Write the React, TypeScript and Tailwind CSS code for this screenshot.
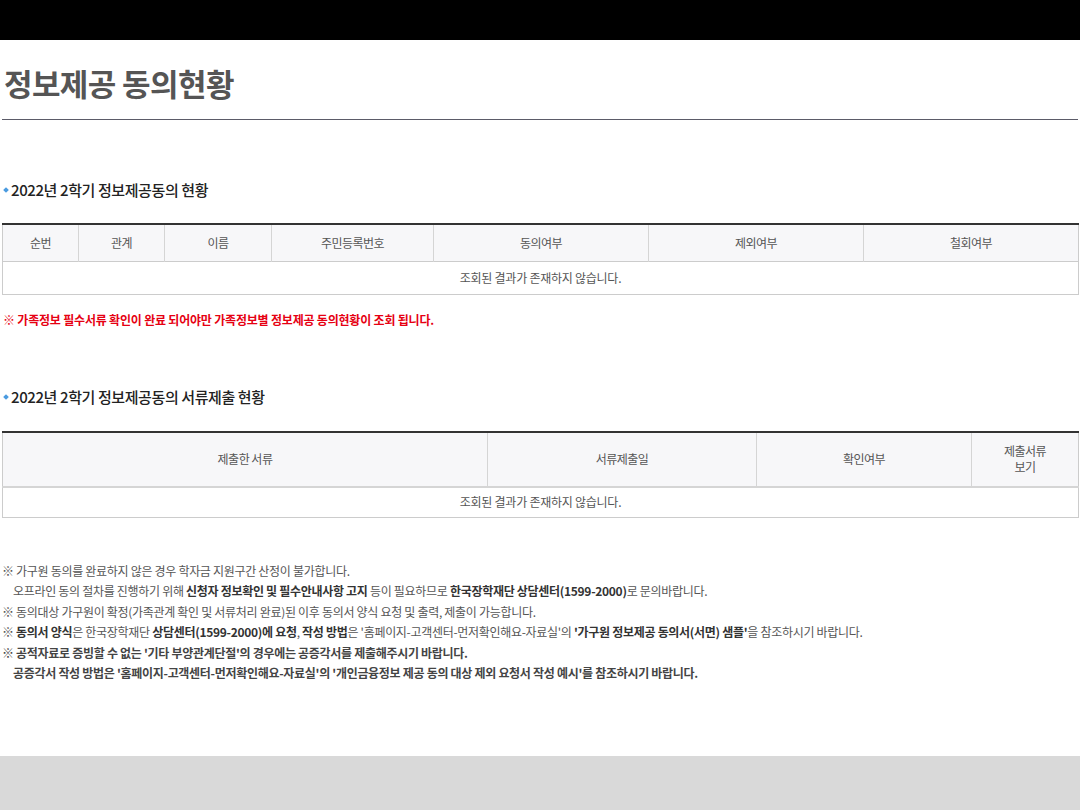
const font = "font-['Noto_Sans_CJK_KR','Noto_Sans',sans-serif]";

function SectionTitle({ children }: { children: React.ReactNode }) {
  return (
    <h3 className="flex items-center h-[20px] text-[15px] leading-[20px] font-medium text-[#222] tracking-[-0.4px]">
      <span className="w-[4px] h-[4px] bg-[#4a9be0] rotate-45 ml-[2px] mr-[3px]" />
      {children}
    </h3>
  );
}

const th = "border-l border-[#d5d5d5] first:border-l-0 text-[12px] font-normal text-[#555] tracking-[-0.5px] text-center leading-[16px]";

export default function App() {
  return (
    <div className={`${font} bg-white min-h-[810px] flex flex-col`}>
      <div className="h-[40px] bg-black" />

      <div className="px-[2px]">
        <div className="pt-[23px] pb-[16px] border-b border-[#5b5b68]">
          <h1 className="pl-[2px] text-[31px] leading-[40px] font-bold text-[#555] tracking-[-0.6px]">
            정보제공 동의현황
          </h1>
        </div>

        <div className="mt-[60px]">
          <SectionTitle>2022년 2학기 정보제공동의 현황</SectionTitle>
        </div>

        <table className="mt-[23px] w-[1076px] table-fixed border-collapse border-t-2 border-t-[#333] border-x border-x-[#ccc]">
          <colgroup>
            <col className="w-[76px]" />
            <col className="w-[86px]" />
            <col className="w-[107px]" />
            <col className="w-[162px]" />
            <col className="w-[215px]" />
            <col className="w-[215px]" />
            <col className="w-[215px]" />
          </colgroup>
          <thead>
            <tr className="h-[37px] bg-[#f7f7f9] border-b border-[#ccc]">
              {["순번", "관계", "이름", "주민등록번호", "동의여부", "제외여부", "철회여부"].map((h) => (
                <th key={h} className={th}>{h}</th>
              ))}
            </tr>
          </thead>
          <tbody>
            <tr className="h-[33px] border-b border-[#ccc]">
              <td colSpan={7} className="text-center text-[12px] text-[#555] tracking-[-0.25px]">
                조회된 결과가 존재하지 않습니다.
              </td>
            </tr>
          </tbody>
        </table>

        <p className="mt-[16px] pl-[1px] text-[12px] leading-[18px] font-bold text-[#e60012] tracking-[-0.2px]">
          ※ 가족정보 필수서류 확인이 완료 되어야만 가족정보별 정보제공 동의현황이 조회 됩니다.
        </p>

        <div className="mt-[58px]">
          <SectionTitle>2022년 2학기 정보제공동의 서류제출 현황</SectionTitle>
        </div>

        <table className="mt-[24px] w-[1076px] table-fixed border-collapse border-t-2 border-t-[#333] border-x border-x-[#ccc]">
          <colgroup>
            <col className="w-[485px]" />
            <col className="w-[269px]" />
            <col className="w-[215px]" />
            <col className="w-[107px]" />
          </colgroup>
          <thead>
            <tr className="h-[55px] bg-[#f7f7f9] border-b-2 border-[#d5d5d5]">
              <th className={th}>제출한 서류</th>
              <th className={th}>서류제출일</th>
              <th className={th}>확인여부</th>
              <th className={th}>
                제출서류
                <br />
                보기
              </th>
            </tr>
          </thead>
          <tbody>
            <tr className="h-[31px] border-b border-[#ccc]">
              <td colSpan={4} className="text-center text-[12px] text-[#555] tracking-[-0.25px]">
                조회된 결과가 존재하지 않습니다.
              </td>
            </tr>
          </tbody>
        </table>

        <div className="mt-[43px] text-[12px] leading-[20.4px] text-[#555] tracking-[-0.3px]">
          <p>※ 가구원 동의를 완료하지 않은 경우 학자금 지원구간 산정이 불가합니다.</p>
          <p className="pl-[11px]">
            오프라인 동의 절차를 진행하기 위해 <b className="text-[#333]">신청자 정보확인 및 필수안내사항 고지</b> 등이 필요하므로{" "}
            <b className="text-[#333]">한국장학재단 상담센터(1599-2000)</b>로 문의바랍니다.
          </p>
          <p>※ 동의대상 가구원이 확정(가족관계 확인 및 서류처리 완료)된 이후 동의서 양식 요청 및 출력, 제출이 가능합니다.</p>
          <p>
            ※ <b className="text-[#333]">동의서 양식</b>은 한국장학재단 <b className="text-[#333]">상담센터(1599-2000)에 요청</b>,{" "}
            <b className="text-[#333]">작성 방법</b>은 '홈페이지-고객센터-먼저확인해요-자료실'의{" "}
            <b className="text-[#333]">'가구원 정보제공 동의서(서면) 샘플'</b>을 참조하시기 바랍니다.
          </p>
          <p className="font-bold text-[#444]">
            ※ 공적자료로 증빙할 수 없는 '기타 부양관계단절'의 경우에는 공증각서를 제출해주시기 바랍니다.
          </p>
          <p className="pl-[11px] font-bold text-[#444]">
            공증각서 작성 방법은 '홈페이지-고객센터-먼저확인해요-자료실'의 '개인금융정보 제공 동의 대상 제외 요청서 작성 예시'를 참조하시기 바랍니다.
          </p>
        </div>
      </div>

      <div className="mt-auto h-[54px] bg-[#d9d9d9]" />
    </div>
  );
}
